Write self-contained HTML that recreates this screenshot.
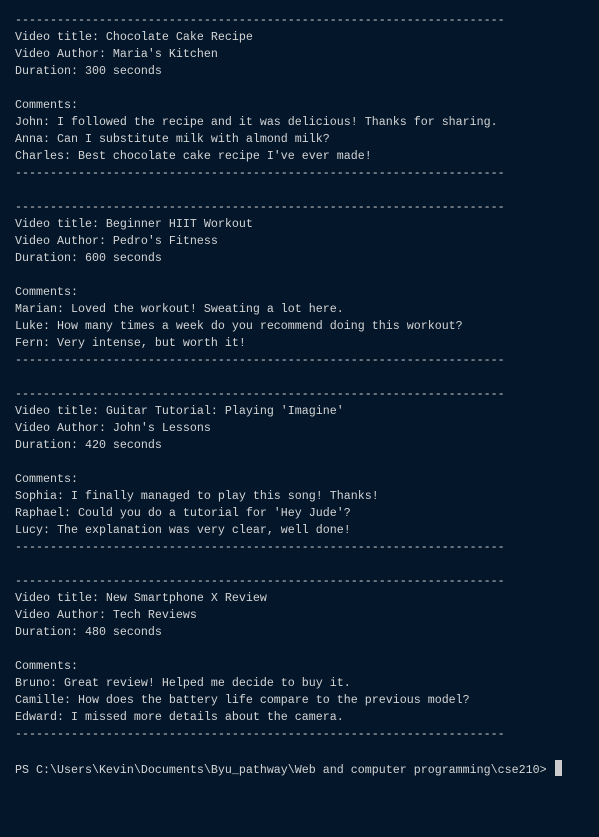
<!DOCTYPE html>
<html><head><style>
html,body{margin:0;padding:0;background:#03162a;}
body{width:599px;height:837px;overflow:hidden;}
pre{margin:0;padding:12px 0 0 15px;font-family:"Liberation Mono",monospace;font-size:11.67px;line-height:17px;color:#d4d4d4;}
.cur{display:inline-block;width:7px;height:16px;background:#cccccc;vertical-align:-3px;margin-left:1px;}
</style></head><body><pre>----------------------------------------------------------------------
Video title: Chocolate Cake Recipe
Video Author: Maria's Kitchen
Duration: 300 seconds

Comments:
John: I followed the recipe and it was delicious! Thanks for sharing.
Anna: Can I substitute milk with almond milk?
Charles: Best chocolate cake recipe I've ever made!
----------------------------------------------------------------------

----------------------------------------------------------------------
Video title: Beginner HIIT Workout
Video Author: Pedro's Fitness
Duration: 600 seconds

Comments:
Marian: Loved the workout! Sweating a lot here.
Luke: How many times a week do you recommend doing this workout?
Fern: Very intense, but worth it!
----------------------------------------------------------------------

----------------------------------------------------------------------
Video title: Guitar Tutorial: Playing 'Imagine'
Video Author: John's Lessons
Duration: 420 seconds

Comments:
Sophia: I finally managed to play this song! Thanks!
Raphael: Could you do a tutorial for 'Hey Jude'?
Lucy: The explanation was very clear, well done!
----------------------------------------------------------------------

----------------------------------------------------------------------
Video title: New Smartphone X Review
Video Author: Tech Reviews
Duration: 480 seconds

Comments:
Bruno: Great review! Helped me decide to buy it.
Camille: How does the battery life compare to the previous model?
Edward: I missed more details about the camera.
----------------------------------------------------------------------

PS C:\Users\Kevin\Documents\Byu_pathway\Web and computer programming\cse210> <span class="cur"></span></pre></body></html>
